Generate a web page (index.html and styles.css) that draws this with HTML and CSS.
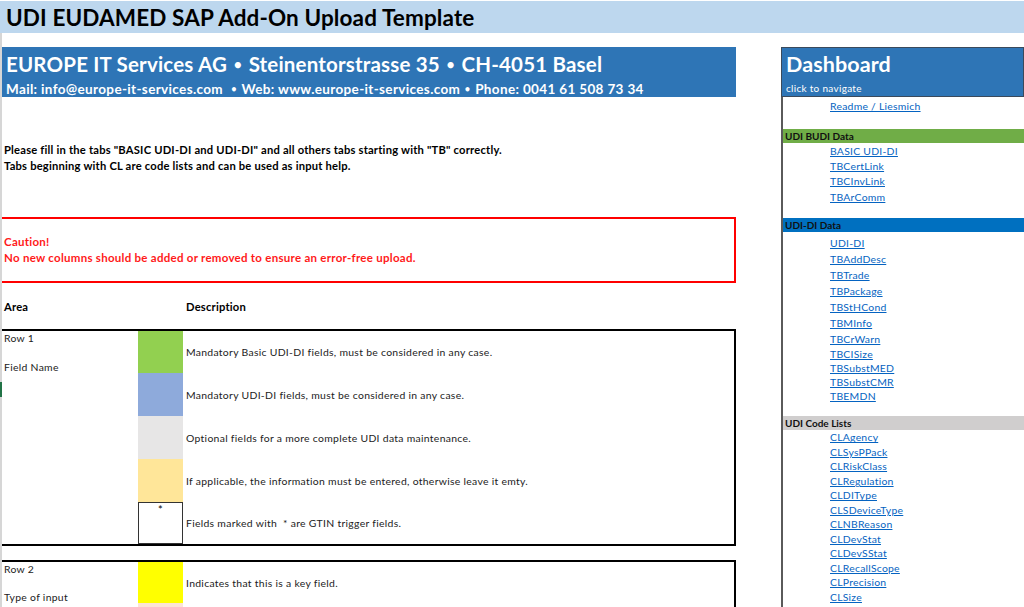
FILE: index.html
```html
<!DOCTYPE html>
<html>
<head>
<meta charset="utf-8">
<title>UDI EUDAMED SAP Add-On Upload Template</title>
<link rel="stylesheet" href="styles.css">
</head>
<body>
<div class="title-bar"><h1>UDI EUDAMED SAP Add-On Upload Template</h1></div>
<div class="sheet">
  <div class="row-marker"></div>
  <main class="main">
    <div class="company">
      <div class="company-name">EUROPE IT Services AG <span class="dot">•</span> Steinentorstrasse 35 <span class="dot">•</span> CH-4051 Basel</div>
      <div class="company-contact">Mail: info@europe-it-services.com &nbsp;<span class="dot">•</span> Web: www.europe-it-services.com <span class="dot">•</span> Phone: 0041 61 508 73 34</div>
    </div>
    <div class="instructions">
      <p>Please fill in the tabs "BASIC UDI-DI and UDI-DI" and all others tabs starting with "TB" correctly.</p>
      <p>Tabs beginning with CL are code lists and can be used as input help.</p>
    </div>
    <div class="caution">
      <p>Caution!</p>
      <p>No new columns should be added or removed to ensure an error-free upload.</p>
    </div>
    <div class="legend-head"><span class="col-area">Area</span><span>Description</span></div>
    <div class="legend legend-1">
      <div class="area"><div>Row 1</div><div class="area-sub">Field Name</div></div>
      <div class="sw sw-green"></div><div class="desc">Mandatory Basic UDI-DI fields, must be considered in any case.</div>
      <div class="sw sw-blue"></div><div class="desc">Mandatory UDI-DI fields, must be considered in any case.</div>
      <div class="sw sw-gray"></div><div class="desc">Optional fields for a more complete UDI data maintenance.</div>
      <div class="sw sw-sand"></div><div class="desc">If applicable, the information must be entered, otherwise leave it emty.</div>
      <div class="sw sw-star">*</div><div class="desc">Fields marked with &nbsp;* are GTIN trigger fields.</div>
    </div>
    <div class="legend legend-2">
      <div class="area"><div>Row 2</div><div class="area-sub">Type of input</div></div>
      <div class="sw sw-yellow"></div><div class="desc">Indicates that this is a key field.</div>
      <div class="sw sw-peach"></div><div class="desc"></div>
    </div>
  </main>
  <aside class="dash">
    <div class="dash-head">
      <div class="dash-title">Dashboard</div>
      <div class="dash-sub">click to navigate</div>
    </div>
    <div class="dash-body">
      <div class="readme"><a href="#">Readme / Liesmich</a></div>
      <div class="sec sec-green">UDI BUDI Data</div>
      <ul class="links l15">
        <li><a href="#">BASIC UDI-DI</a></li>
        <li><a href="#">TBCertLink</a></li>
        <li><a href="#">TBCInvLink</a></li>
        <li><a href="#">TBArComm</a></li>
      </ul>
      <div class="sec sec-blue">UDI-DI Data</div>
      <ul class="links l16">
        <li><a href="#">UDI-DI</a></li>
        <li><a href="#">TBAddDesc</a></li>
        <li><a href="#">TBTrade</a></li>
        <li><a href="#">TBPackage</a></li>
        <li><a href="#">TBStHCond</a></li>
        <li><a href="#">TBMInfo</a></li>
        <li><a href="#">TBCrWarn</a></li>
        <li class="s14"><a href="#">TBCISize</a></li>
        <li class="s14"><a href="#">TBSubstMED</a></li>
        <li class="s14"><a href="#">TBSubstCMR</a></li>
        <li class="s14"><a href="#">TBEMDN</a></li>
      </ul>
      <div class="sec sec-gray">UDI Code Lists</div>
      <ul class="links l145">
        <li><a href="#">CLAgency</a></li>
        <li><a href="#">CLSysPPack</a></li>
        <li><a href="#">CLRiskClass</a></li>
        <li><a href="#">CLRegulation</a></li>
        <li><a href="#">CLDIType</a></li>
        <li><a href="#">CLSDeviceType</a></li>
        <li><a href="#">CLNBReason</a></li>
        <li><a href="#">CLDevStat</a></li>
        <li><a href="#">CLDevSStat</a></li>
        <li><a href="#">CLRecallScope</a></li>
        <li><a href="#">CLPrecision</a></li>
        <li><a href="#">CLSize</a></li>
      </ul>
    </div>
  </aside>
</div>
</body>
</html>
```

FILE: styles.css
```css
* { box-sizing: border-box; }
html, body { margin: 0; padding: 0; }
body {
  width: 1024px;
  height: 607px;
  overflow: hidden;
  background: #ffffff;
  font-family: Lato, "Liberation Sans", sans-serif;
  color: #000000;
}
p { margin: 0; }

.title-bar {
  margin-top: 1px;
  height: 32px;
  background: #bdd7ee;
  display: flex;
  align-items: center;
  padding-left: 6px;
}
.title-bar h1 {
  margin: 0;
  font-size: 22.5px;
  font-weight: 700;
  letter-spacing: 0.12px;
}

.sheet {
  position: relative;
  display: flex;
  gap: 45px;
  padding-top: 14px;
  border-left: 2px solid #d6d6d6;
  height: 574px;
}
.row-marker {
  position: absolute;
  left: -2px;
  top: 349px;
  width: 2px;
  height: 15px;
  background: #217346;
}

.main { width: 734px; flex: none; }

.company {
  height: 50px;
  background: #2e75b6;
  color: #ffffff;
  font-weight: 700;
  padding: 5px 0 0 4px;
}
.company-name { font-size: 20.5px; line-height: 24px; letter-spacing: 0.18px; }
.company-contact { font-size: 13.5px; line-height: 16px; margin-top: 3px; letter-spacing: 0.35px; }
.dot { font-family: "DejaVu Sans", sans-serif; font-size: 0.85em; }

.instructions {
  margin-top: 45px;
  padding-left: 2px;
  font-size: 11.2px;
  font-weight: 700;
  line-height: 16px;
  letter-spacing: 0.2px;
}

.caution {
  margin-top: 43px;
  height: 66px;
  border: 2px solid #ff0000;
  border-left: none;
  color: #ff1a1a;
  font-size: 11.5px;
  font-weight: 700;
  line-height: 16px;
  letter-spacing: 0.27px;
  padding: 15px 0 0 2px;
}

.legend-head {
  display: flex;
  height: 46px;
  padding: 16px 0 0 2px;
  font-size: 11.2px;
  font-weight: 700;
  line-height: 16px;
  letter-spacing: 0.2px;
}
.col-area { width: 182px; }

.legend {
  display: grid;
  grid-template-columns: 136px 45px 1fr;
  border: 2px solid #000000;
  border-left: none;
  font-size: 10.4px;
  letter-spacing: 0.3px;
}
.legend-1 {
  grid-template-rows: 42px 43px 43px 43px 42px;
}
.legend-2 {
  margin-top: 14px;
  grid-template-rows: 41px 43px;
}
.area {
  grid-row: 1 / -1;
  padding: 0 0 0 2px;
  line-height: 14px;
  color: #222222;
}
.area-sub { margin-top: 15px; }
.legend-2 .area { padding-top: 0; }
.legend-2 .area-sub { margin-top: 14px; }
.desc {
  display: flex;
  align-items: center;
  padding-left: 3px;
  color: #222222;
}
.sw-green { background: #92d050; }
.sw-blue { background: #8eaadb; }
.sw-gray { background: #e7e6e6; }
.sw-sand { background: #ffe699; }
.sw-yellow { background: #ffff00; }
.sw-peach { background: #fce4d6; }
.sw-star {
  border: 1px solid #333333;
  text-align: center;
  font-size: 11px;
  line-height: 9px;
  padding-top: 2px;
}

.dash { flex: 1; min-width: 0; }
.dash-head {
  height: 50px;
  background: #2e75b6;
  border: 1px solid #3a4a5c;
  color: #ffffff;
  padding: 3px 0 0 4px;
}
.dash-title { font-size: 21.5px; font-weight: 700; line-height: 26px; letter-spacing: 0.1px; }
.dash-sub { font-size: 10px; line-height: 12px; margin-top: 5px; letter-spacing: 0.3px; }

.dash-body {
  border-left: 2px solid #5a5a5a;
  height: 520px;
  font-size: 10.4px;
  letter-spacing: 0.25px;
}
.readme {
  height: 32px;
  padding: 2px 0 0 47px;
  line-height: 14px;
}
a { color: #0563c1; text-decoration: underline; }

.sec {
  height: 14px;
  line-height: 14px;
  padding-left: 2px;
  font-weight: 700;
  font-size: 10px;
  letter-spacing: 0;
}
.sec-green { background: #70ad47; color: #111111; }
.sec-blue { background: #0070c0; color: #111111; }
.sec-gray { background: #d0cece; color: #111111; }

.links { list-style: none; margin: 0; padding: 0 0 0 47px; }
.l15 { padding-top: 0.6px; padding-bottom: 12.8px; }
.l15 li { height: 15.4px; line-height: 15.4px; }
.l16 { padding-top: 3px; padding-bottom: 13px; }
.l16 li { height: 16px; line-height: 16px; }
.l16 li.s14 { height: 14px; line-height: 14px; }
.l145 { padding-top: 0.5px; }
.l145 li { height: 14.5px; line-height: 14.5px; }
```
